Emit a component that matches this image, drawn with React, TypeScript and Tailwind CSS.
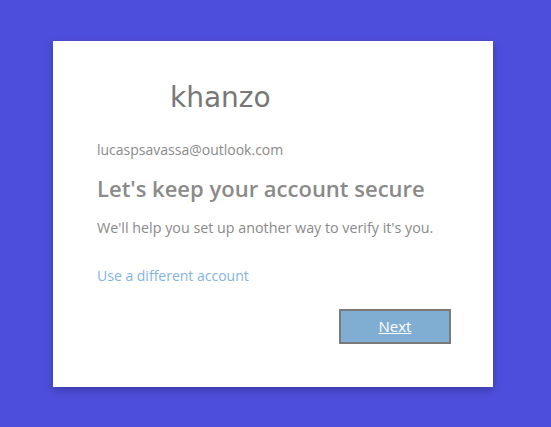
import React from "react";

export default function App() {
  return (
    <div className="w-[551px] h-[427px] bg-[#4e4edc] flex items-start justify-start pl-[53px] pt-[41px]" style={{ fontFamily: '"Open Sans", "Noto Sans", sans-serif' }}>
      <div className="w-[440px] h-[346px] bg-white shadow-[0_3px_8px_rgba(0,0,0,0.25)] flex flex-col pl-[44px] pr-[42px]">
        <div className="pl-[73px] pt-[39px] h-[92px] text-[28px] leading-[36px] text-[#777777]" style={{ fontFamily: '"Comic Sans MS", "DejaVu Sans", sans-serif' }}>
          khanzo
        </div>
        <div className="mt-[7px] text-[14px] leading-[20px] text-[#8a8a8a]">lucaspsavassa@outlook.com</div>
        <div className="mt-[13px] text-[22px] leading-[30px] font-semibold text-[#8a8a8a]">Let's keep your account secure</div>
        <div className="mt-[15px] text-[14.3px] leading-[20px] text-[#8a8a8a]">We'll help you set up another way to verify it's you.</div>
        <div className="mt-[28px] text-[14px] leading-[20px] text-[#82b4df]">Use a different account</div>
        <div className="mt-[23px] flex justify-end">
          <button className="w-[112px] h-[35px] bg-[#80aed3] border-2 border-[#7a7a7a] text-white text-[15px] underline">Next</button>
        </div>
      </div>
    </div>
  );
}
